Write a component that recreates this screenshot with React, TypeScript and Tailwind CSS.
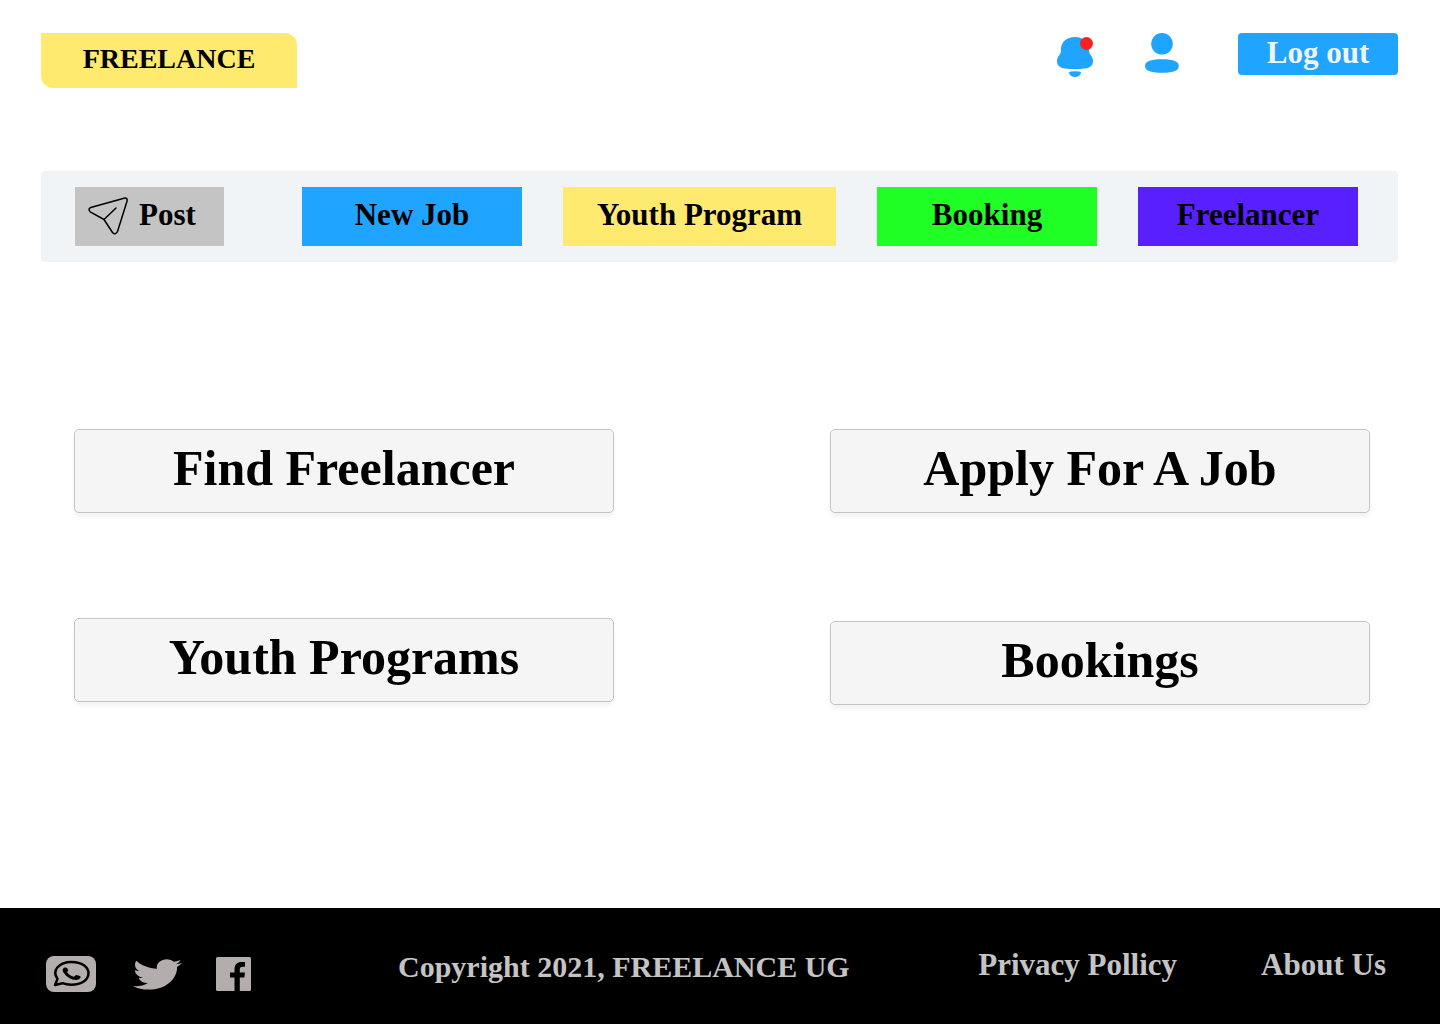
import type { ReactNode } from "react";

const SERIF = "font-['Liberation_Serif',serif]";

function BellIcon() {
  return (
    <svg viewBox="0 0 36 41" className="h-[41px] w-9" aria-hidden="true">
      <path
        fill="#1fa4ff"
        d="M18 0C9.500 0 4 5.500 4 11.500C4 15.500 3.600 16.500 2 18.500C.6 20.300 0 22 0 24C0 28.500 3 31 8 31.500C14 32.200 22 32.200 28 31.500C33 31 36 28.500 36 24C36 22 35.400 20.300 34 18.500C32.400 16.500 32 15.500 32 11.500C32 5.500 26.500 0 18 0Z"
      />
      <path fill="#1fa4ff" d="M12 36Q11.800 34.300 14 34.500Q18 34 22 34.500Q24.200 34.300 24 36C23.200 38.500 21 40 18 40S12.800 38.500 12 36Z" />
      <circle cx="29.500" cy="6.500" r="6.500" fill="#ff1f1f" />
    </svg>
  );
}

function UserIcon() {
  return (
    <svg viewBox="0 0 34 40" className="h-10 w-[34px]" aria-hidden="true" fill="#1fa4ff">
      <circle cx="17" cy="10.800" r="10.800" />
      <path d="M0 33C0 28.500 5 26.200 17 26.200S33.800 28.500 33.800 33S29 39.800 17 39.800S0 37.500 0 33Z" />
    </svg>
  );
}

function PlaneIcon() {
  return (
    <svg
      viewBox="0 0 40 38"
      className="h-[38px] w-10"
      aria-hidden="true"
      fill="none"
      stroke="#000"
      strokeWidth="1.500"
      strokeLinecap="round"
      strokeLinejoin="round"
    >
      <path d="M2.800 10.500L36 1.200Q39.800.5 39 4.200L29.500 34.500Q27.500 38.500 24.500 35.500L16 22.500L2.200 14.800Q-.5 12 2.800 10.500Z" />
      <path d="M16 22.500L28 11" />
    </svg>
  );
}

function WhatsappIcon() {
  return (
    <svg viewBox="0 0 50 36" className="h-9 w-[50px]" aria-hidden="true">
      <rect width="50" height="36" rx="8" fill="#b3adad" />
      <path
        d="M9 29L11.500 23C5.500 14.500 13 6 25.500 6C36 6 42.500 11 42.500 17.300C42.500 24 35.500 28.700 25.500 28.700C22 28.700 19 28.200 16.500 27.200Z"
        fill="none"
        stroke="#000"
        strokeWidth="2.500"
        strokeLinejoin="round"
      />
      <path
        d="M19 11.500C16.500 12 16 14.500 17.800 17C21 21.300 25 23.800 30 24C33 24.100 35 22.300 34.500 20.600C33.500 19.800 31.500 19 30.200 19C29.200 19.300 28.500 20.800 27.500 20.800C25 20 22.500 18.300 21.300 16.600C21 15.800 22.500 15 22.200 14C21.500 12.300 21 11.300 19 11.500Z"
        fill="#000"
      />
    </svg>
  );
}

function TwitterIcon() {
  return (
    <svg viewBox="0 2 24 20" preserveAspectRatio="none" className="h-[31px] w-[49px]" aria-hidden="true" fill="#b3adad">
      <path d="M23.950 4.570a10 10 0 0 1-2.820.77 4.960 4.960 0 0 0 2.160-2.720c-.95.560-2 .96-3.130 1.180a4.920 4.920 0 0 0-8.380 4.480C7.690 8.090 4.070 6.130 1.640 3.160a4.820 4.820 0 0 0-.67 2.480c0 1.710.87 3.210 2.190 4.090a4.900 4.900 0 0 1-2.230-.61v.060a4.920 4.920 0 0 0 3.950 4.830 5 5 0 0 1-2.210.080 4.940 4.940 0 0 0 4.600 3.420A9.870 9.870 0 0 1 0 19.540a13.990 13.990 0 0 0 7.560 2.210c9.050 0 13.990-7.500 13.990-13.980 0-.21 0-.42-.020-.63a9.940 9.940 0 0 0 2.420-2.570Z" />
    </svg>
  );
}

function FacebookIcon() {
  return (
    <svg viewBox="0 0 35 34" className="h-[34px] w-[35px]" aria-hidden="true">
      <rect width="35" height="34" rx="1.500" fill="#b3adad" />
      <path fill="#000" d="M18.500 34V20.500H14V15.500H18.500V12C18.500 7.500 21.500 5 25.500 5H29V9.800H26.500C24.500 9.800 23.800 10.800 23.800 12.500V15.500H29L28.300 20.500H23.800V34Z" />
    </svg>
  );
}

function Card({ children }: { children: ReactNode }) {
  return (
    <button className="flex h-[84px] w-full items-center justify-center rounded-[5px] border border-[#c4c4c4] bg-[#f5f5f5] pb-1.5 text-[50px] leading-none shadow-[0_4px_4px_rgba(0,0,0,0.05)]">
      {children}
    </button>
  );
}

const tabs = [
  { label: "New Job", color: "bg-[#1fa4ff]" },
  { label: "Youth Program", color: "bg-[#ffea70]" },
  { label: "Booking", color: "bg-[#1fff26]" },
  { label: "Freelancer", color: "bg-[#581fff]" },
];

export default function App() {
  return (
    <div className={`flex min-h-screen flex-col bg-white font-bold text-black ${SERIF}`}>
      <header className="flex items-start justify-between pt-[33px] pr-[42px] pl-[41px]">
        <a
          href="#"
          className="flex h-[55px] w-64 items-center justify-center rounded-tr-xl rounded-bl-xl bg-[#ffea70] pb-1 text-[28px] leading-none"
        >
          FREELANCE
        </a>
        <div className="flex items-start">
          <button aria-label="Notifications" className="mt-1 mr-[52px]">
            <BellIcon />
          </button>
          <button aria-label="Profile" className="mr-[59px]">
            <UserIcon />
          </button>
          <button className="flex h-[42px] w-40 items-center justify-center rounded bg-[#1fa4ff] pb-1 text-[31px] leading-none text-[#f0f4f7]">
            Log out
          </button>
        </div>
      </header>

      <nav className="mt-[83px] mr-[42px] ml-[41px] flex rounded bg-[#f0f4f7] py-4 pr-10 pl-[34px] text-[31px] leading-none">
        <button className="flex h-[59px] w-[149px] items-center bg-[#c4c4c4] pb-1 pl-[13px]">
          <span className="pt-0.5">
            <PlaneIcon />
          </span>
          <span className="ml-[11px]">Post</span>
        </button>
        <div className="ml-[78px] grid flex-1 grid-cols-[220fr_273fr_220fr_220fr] gap-[41px]">
          {tabs.map((tab) => (
            <button key={tab.label} className={`flex h-[59px] items-center justify-center pb-1 whitespace-nowrap ${tab.color}`}>
              {tab.label}
            </button>
          ))}
        </div>
      </nav>

      <main className="mt-[167px] mb-16 grid grid-cols-2 gap-[216px] pr-[70px] pl-[74px]">
        <div className="flex flex-col gap-[105px]">
          <Card>Find Freelancer</Card>
          <Card>Youth Programs</Card>
        </div>
        <div className="flex flex-col gap-[108px]">
          <Card>Apply For A Job</Card>
          <Card>Bookings</Card>
        </div>
      </main>

      <footer className="mt-auto flex h-[116px] items-center bg-black pr-[54px] pl-[46px] leading-none text-[#c4c4c4]">
        <div className="flex items-center pt-4">
          <a href="#" aria-label="WhatsApp" className="mr-[37px]">
            <WhatsappIcon />
          </a>
          <a href="#" aria-label="Twitter" className="mr-[34px]">
            <TwitterIcon />
          </a>
          <a href="#" aria-label="Facebook">
            <FacebookIcon />
          </a>
        </div>
        <p className="ml-[147px] pt-0.5 text-[30px]">Copyright 2021, FREELANCE UG</p>
        <div className="ml-auto flex gap-[84px] pb-1 text-[31px]">
          <a href="#">Privacy Pollicy</a>
          <a href="#">About Us</a>
        </div>
      </footer>
    </div>
  );
}
